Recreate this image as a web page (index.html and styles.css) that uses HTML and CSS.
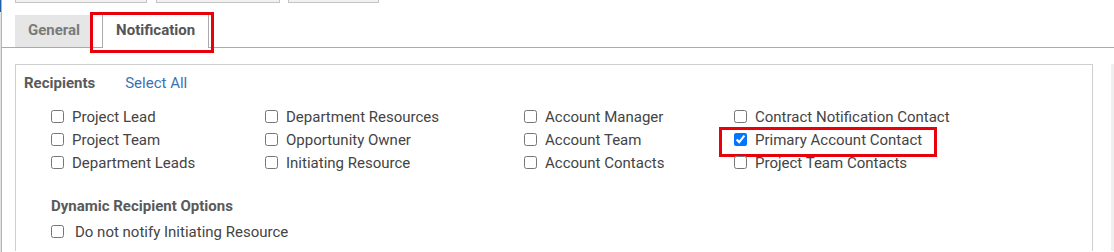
FILE: index.html
```html
<!DOCTYPE html>
<html lang="en">
<head>
    <meta charset="UTF-8">
    <title>Notification Settings</title>
    <link rel="stylesheet" href="styles.css">
</head>
<body>
    <div class="page">
        <div class="rail"><div class="rail-top"></div></div>
        <div class="main">
            <div class="toolbar">
                <div class="tool tool-1"></div>
                <div class="tool tool-2"></div>
                <div class="tool tool-3"></div>
            </div>

            <div class="tabs">
                <div class="tab">General</div>
                <div class="tab active">Notification<span class="mark mark-tab"></span></div>
            </div>

            <div class="content">
                <div class="panel">
                    <div class="panel-head">
                        <span class="section-title">Recipients</span>
                        <a class="link" href="#">Select All</a>
                    </div>

                    <div class="recipients">
                        <label class="check"><input type="checkbox"> Project Lead</label>
                        <label class="check"><input type="checkbox"> Department Resources</label>
                        <label class="check"><input type="checkbox"> Account Manager</label>
                        <label class="check"><input type="checkbox"> Contract Notification Contact</label>

                        <label class="check"><input type="checkbox"> Project Team</label>
                        <label class="check"><input type="checkbox"> Opportunity Owner</label>
                        <label class="check"><input type="checkbox"> Account Team</label>
                        <label class="check"><input type="checkbox" checked> Primary Account Contact<span class="mark mark-check"></span></label>

                        <label class="check"><input type="checkbox"> Department Leads</label>
                        <label class="check"><input type="checkbox"> Initiating Resource</label>
                        <label class="check"><input type="checkbox"> Account Contacts</label>
                        <label class="check"><input type="checkbox"> Project Team Contacts</label>
                    </div>

                    <div class="dynamic">
                        <div class="section-title">Dynamic Recipient Options</div>
                        <label class="check wide"><input type="checkbox"> Do not notify Initiating Resource</label>
                    </div>
                </div>
                <div class="scroll"></div>
            </div>
        </div>
    </div>
</body>
</html>
```

FILE: styles.css
```css
body {
    margin: 0;
    font-family: Roboto, "Liberation Sans", sans-serif;
    color: #444;
    background: #fff;
    overflow: hidden;
}

.page {
    display: flex;
    height: 252px;
    overflow: hidden;
}

.rail {
    width: 2px;
    background: #e2e2e2;
    border-right: 1px solid #b5b5b5;
}

.rail-top {
    height: 12px;
    background: #1f5fa8;
}

.main {
    flex: 1;
}

.toolbar {
    display: flex;
    height: 3px;
    padding-left: 13px;
}

.tool {
    background: #f1f1f1;
    border: 1px solid #c4c4c4;
    border-top: none;
}

.tool-1 { width: 130px; }
.tool-2 { width: 122px; margin-left: 9px; }
.tool-3 { width: 89px; margin-left: 8px; }

.tabs {
    display: flex;
    align-items: flex-end;
    gap: 10px;
    margin-top: 11px;
    padding-left: 13px;
    border-bottom: 1px solid #aaa;
}

.tab {
    position: relative;
    height: 32px;
    line-height: 30px;
    padding: 0 12px 0 13px;
    font-size: 15px;
    font-weight: bold;
    color: #7a7a7a;
    background: #e6e6e6;
}

.tab.active {
    color: #555;
    background: #fff;
    border: 1px solid #aaa;
    border-bottom: none;
    margin-bottom: -1px;
    height: 33px;
    padding: 0 13px;
}

.mark {
    position: absolute;
    border: 3px solid #e8000b;
    pointer-events: none;
}

.mark-tab {
    left: -13px;
    top: -3px;
    width: 118px;
    height: 35px;
}

.content {
    display: flex;
    margin-top: 16px;
    padding-left: 13px;
}

.panel {
    width: 1076px;
    height: 186px;
    border: 1px solid #cfcfcf;
    border-bottom: none;
}

.scroll {
    width: 3px;
    margin-left: 18px;
    background: #efefef;
}

.panel-head {
    display: flex;
    align-items: baseline;
    gap: 30px;
    padding: 9px 8px 0;
}

.section-title {
    font-size: 15px;
    font-weight: bold;
    color: #5a5a5a;
}

.link {
    font-size: 15px;
    color: #3a72b5;
    text-decoration: none;
}

.recipients {
    display: grid;
    grid-template-columns: 214px 259px 210px auto;
    grid-auto-rows: 23px;
    margin-top: 13px;
    padding-left: 35px;
}

.check {
    position: relative;
    display: flex;
    align-items: center;
    gap: 8px;
    font-size: 15px;
    color: #444;
    white-space: nowrap;
}

.check input {
    width: 13px;
    height: 13px;
    margin: 0;
}

.mark-check {
    left: -15px;
    top: -1px;
    width: 212px;
    height: 24px;
}

.dynamic {
    margin-top: 23px;
    padding-left: 35px;
}

.dynamic .section-title {
    line-height: 18px;
}

.check.wide {
    gap: 11px;
    height: 25px;
    margin-top: 4px;
}
```
